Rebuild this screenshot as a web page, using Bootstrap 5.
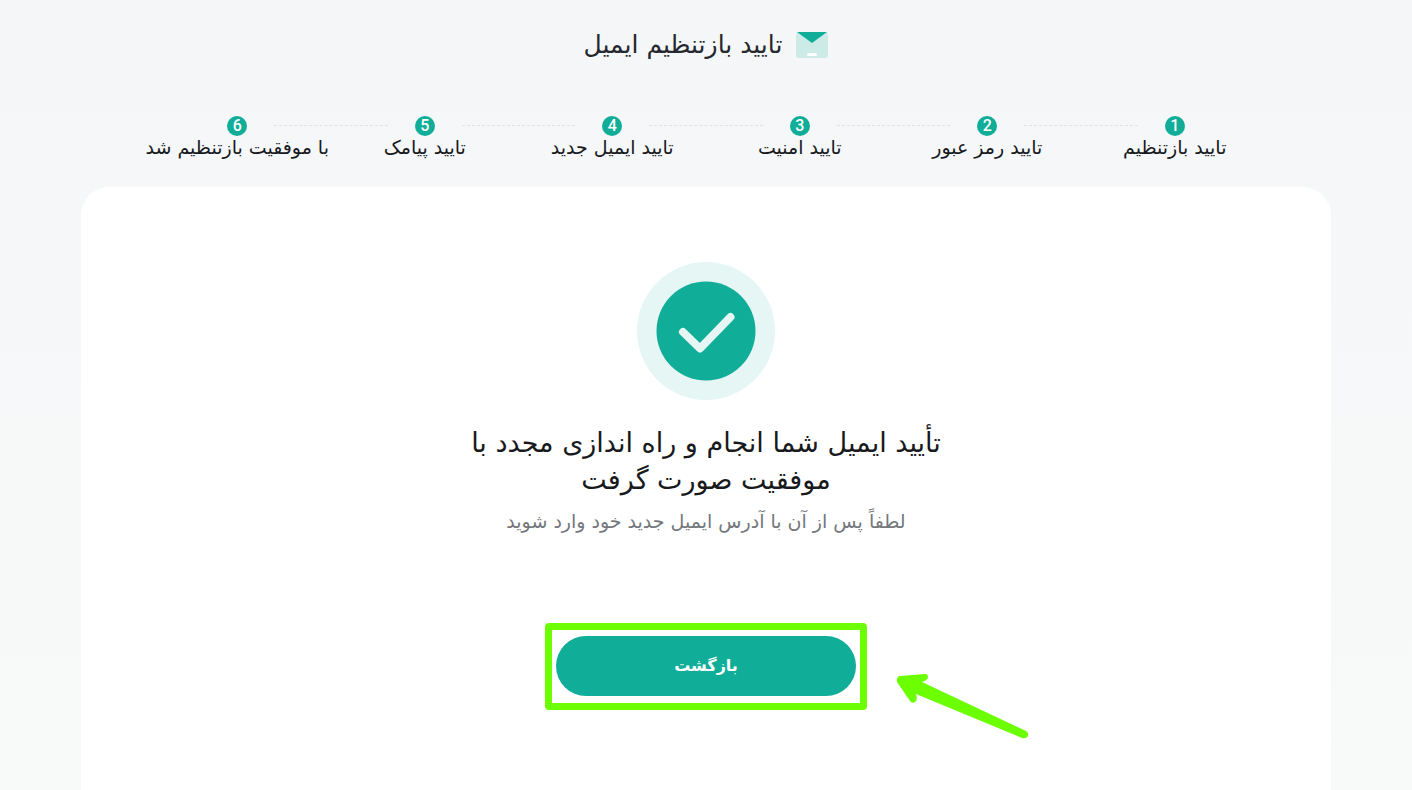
<!DOCTYPE html>
<html lang="fa" dir="rtl">
<head>
<meta charset="utf-8">
<meta name="viewport" content="width=device-width, initial-scale=1">
<title>تایید بازتنظیم ایمیل</title>
<link href="https://cdn.jsdelivr.net/npm/bootstrap@5.3.0/dist/css/bootstrap.min.css" rel="stylesheet">
<style>
  :root { --brand: #10ad98; --brand-soft: #e5f6f4; --mark: #6cff00; }
  body { font-family: "DejaVu Sans", sans-serif; color: #17191d; background: linear-gradient(#f4f6f8, #f8faf9); }
  .shell { width: 89%; max-width: 1250px; }
  .page-title { font-size: 25px; line-height: 32px; color: #25282e; gap: 14px; margin-top: 29px; }
  .steps { width: 90%; margin-top: 55px; margin-bottom: 29px; }
  .step { flex: 1 1 0; min-width: 0; line-height: 22px; font-size: 19px; }
  .step-num { width: 20px; height: 20px; line-height: 20px; font-family: Roboto, sans-serif; font-size: 16px; font-weight: 500; color: #fff; background: var(--brand); }
  .step + .step::before { content: ""; position: absolute; top: 9px; right: calc(-50% + 37px); left: calc(50% + 37px); border-top: 1px dashed #e0e3e6; }
  .panel { border-radius: 28px; padding-top: 75px; }
  .done-title { max-width: 500px; font-size: 27px; line-height: 37px; margin-top: 24px; }
  .done-note { font-size: 19px; line-height: 28px; color: #73777c; margin-top: 9px; }
  .callout { margin-top: 88px; border: 7px solid var(--mark); border-radius: 4px; padding: 6px 4px 7px; }
  .btn-back { width: 300px; height: 60px; font-size: 16px; --bs-btn-color: #fff; --bs-btn-bg: var(--brand); --bs-btn-hover-color: #fff; --bs-btn-hover-bg: #0d9684; }
  .arrow { left: calc(100% + 36px); top: 40px; }
</style>
</head>
<body>
<div class="min-vh-100 d-flex flex-column align-items-center overflow-hidden">
  <header class="shell d-flex flex-column align-items-center">
    <h1 class="page-title d-flex align-items-center mb-0 fw-normal">
      <svg width="32" height="28" viewBox="0 0 32 28" aria-hidden="true">
        <rect y="1" width="32" height="26" rx="3" fill="#cdebe6"/>
        <path d="M1 1H31L16 12Z" fill="#10ad98"/>
        <path d="M12.500 23.500H19.500" stroke="#fff" stroke-width="3" stroke-linecap="round"/>
      </svg>
      <span>تایید بازتنظیم ایمیل</span>
    </h1>
    <ol class="steps list-unstyled px-0 d-flex text-center text-nowrap">
      <li class="step position-relative d-flex flex-column align-items-center"><span class="step-num rounded-circle">1</span><span>تایید بازتنظیم</span></li>
      <li class="step position-relative d-flex flex-column align-items-center"><span class="step-num rounded-circle">2</span><span>تایید رمز عبور</span></li>
      <li class="step position-relative d-flex flex-column align-items-center"><span class="step-num rounded-circle">3</span><span>تایید امنیت</span></li>
      <li class="step position-relative d-flex flex-column align-items-center"><span class="step-num rounded-circle">4</span><span>تایید ایمیل جدید</span></li>
      <li class="step position-relative d-flex flex-column align-items-center"><span class="step-num rounded-circle">5</span><span>تایید پیامک</span></li>
      <li class="step position-relative d-flex flex-column align-items-center"><span class="step-num rounded-circle">6</span><span>با موفقیت بازتنظیم شد</span></li>
    </ol>
  </header>
  <main class="shell panel bg-white rounded-bottom-0 flex-grow-1 d-flex flex-column align-items-center text-center">
    <svg width="138" height="138" viewBox="0 0 138 138" aria-hidden="true">
      <circle cx="69" cy="69" r="69" fill="#e5f6f4"/>
      <circle cx="69" cy="69" r="49.500" fill="#10ad98"/>
      <path d="M46 70L63 86.500L93.500 55" fill="none" stroke="#e5f6f4" stroke-width="8" stroke-linecap="round" stroke-linejoin="round"/>
    </svg>
    <h2 class="done-title mb-0 fw-normal">تأیید ایمیل شما انجام و راه اندازی مجدد با موفقیت صورت گرفت</h2>
    <p class="done-note mb-0">لطفاً پس از آن با آدرس ایمیل جدید خود وارد شوید</p>
    <div class="callout position-relative">
      <button type="button" class="btn btn-back border-0 rounded-pill fw-bold d-block">بازگشت</button>
      <svg class="arrow position-absolute" width="134" height="72" viewBox="0 0 134 72" aria-hidden="true">
        <path d="M4 6L29 4Q32 4 32 7Q32 10 26 12L130 61Q133 63 132 66Q130 69 126 68L20 24Q22 30 19 32Q16 34 14 31L1 12Q0 7 4 6Z" fill="#6cff00"/>
      </svg>
    </div>
  </main>
</div>
<script src="https://cdn.jsdelivr.net/npm/bootstrap@5.3.0/dist/js/bootstrap.bundle.min.js"></script>
</body>
</html>
